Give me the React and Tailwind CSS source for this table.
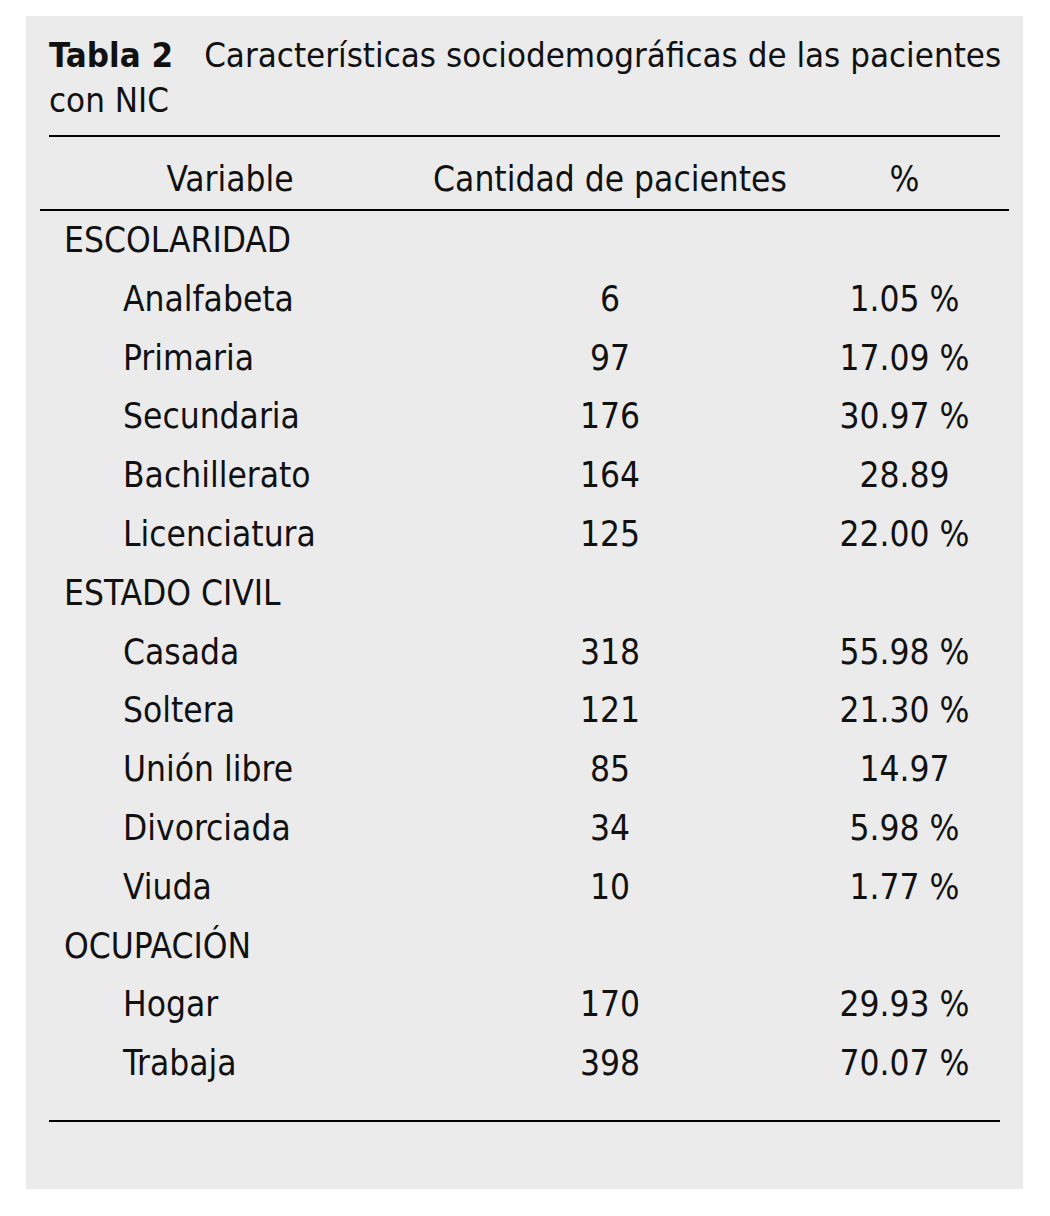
const rows = [
  { section: "ESCOLARIDAD" },
  { label: "Analfabeta", n: "6", pct: "1.05 %" },
  { label: "Primaria", n: "97", pct: "17.09 %" },
  { label: "Secundaria", n: "176", pct: "30.97 %" },
  { label: "Bachillerato", n: "164", pct: "28.89" },
  { label: "Licenciatura", n: "125", pct: "22.00 %" },
  { section: "ESTADO CIVIL" },
  { label: "Casada", n: "318", pct: "55.98 %" },
  { label: "Soltera", n: "121", pct: "21.30 %" },
  { label: "Unión libre", n: "85", pct: "14.97" },
  { label: "Divorciada", n: "34", pct: "5.98 %" },
  { label: "Viuda", n: "10", pct: "1.77 %" },
  { section: "OCUPACIÓN" },
  { label: "Hogar", n: "170", pct: "29.93 %" },
  { label: "Trabaja", n: "398", pct: "70.07 %" },
];

export default function App() {
  return (
    <div className="min-h-[1216px] bg-white pt-[16px] pl-[26px] font-['DejaVu_Sans_Condensed','DejaVu_Sans',sans-serif] font-stretch-condensed text-[#111]">
      <div className="w-[997px] h-[1173px] bg-[#ebebeb] px-[23px] pt-[17px]">
        <h2 className="text-[34.6px] leading-[45px] font-normal">
          <span className="whitespace-nowrap">
            <span className="font-bold">Tabla 2</span>
            <span className="ml-[31px]">Características sociodemográficas de las pacientes</span>
          </span>
          <br />
          con NIC
        </h2>

        <div className="mt-[12px] border-t-2 border-black" />

        <div className="-mx-[9px] text-[35px]">
          <div className="grid grid-cols-[380px_380px_1fr] border-b-2 border-black pt-[13px]">
            <div className="h-[59px] leading-[59px] text-center">Variable</div>
            <div className="h-[59px] leading-[59px] text-center">Cantidad de pacientes</div>
            <div className="h-[59px] leading-[59px] text-center">%</div>
          </div>

          {rows.map((r, i) =>
            r.section ? (
              <div key={i} className="grid grid-cols-[380px_380px_1fr] h-[58.8px] leading-[58.8px]">
                <div className="pl-[24px] whitespace-nowrap">{r.section}</div>
                <div />
                <div />
              </div>
            ) : (
              <div key={i} className="grid grid-cols-[380px_380px_1fr] h-[58.8px] leading-[58.8px]">
                <div className="pl-[83px] whitespace-nowrap">{r.label}</div>
                <div className="text-center">{r.n}</div>
                <div className="text-center">{r.pct}</div>
              </div>
            )
          )}
        </div>

        <div className="mt-[27px] border-t-2 border-black" />
      </div>
    </div>
  );
}
